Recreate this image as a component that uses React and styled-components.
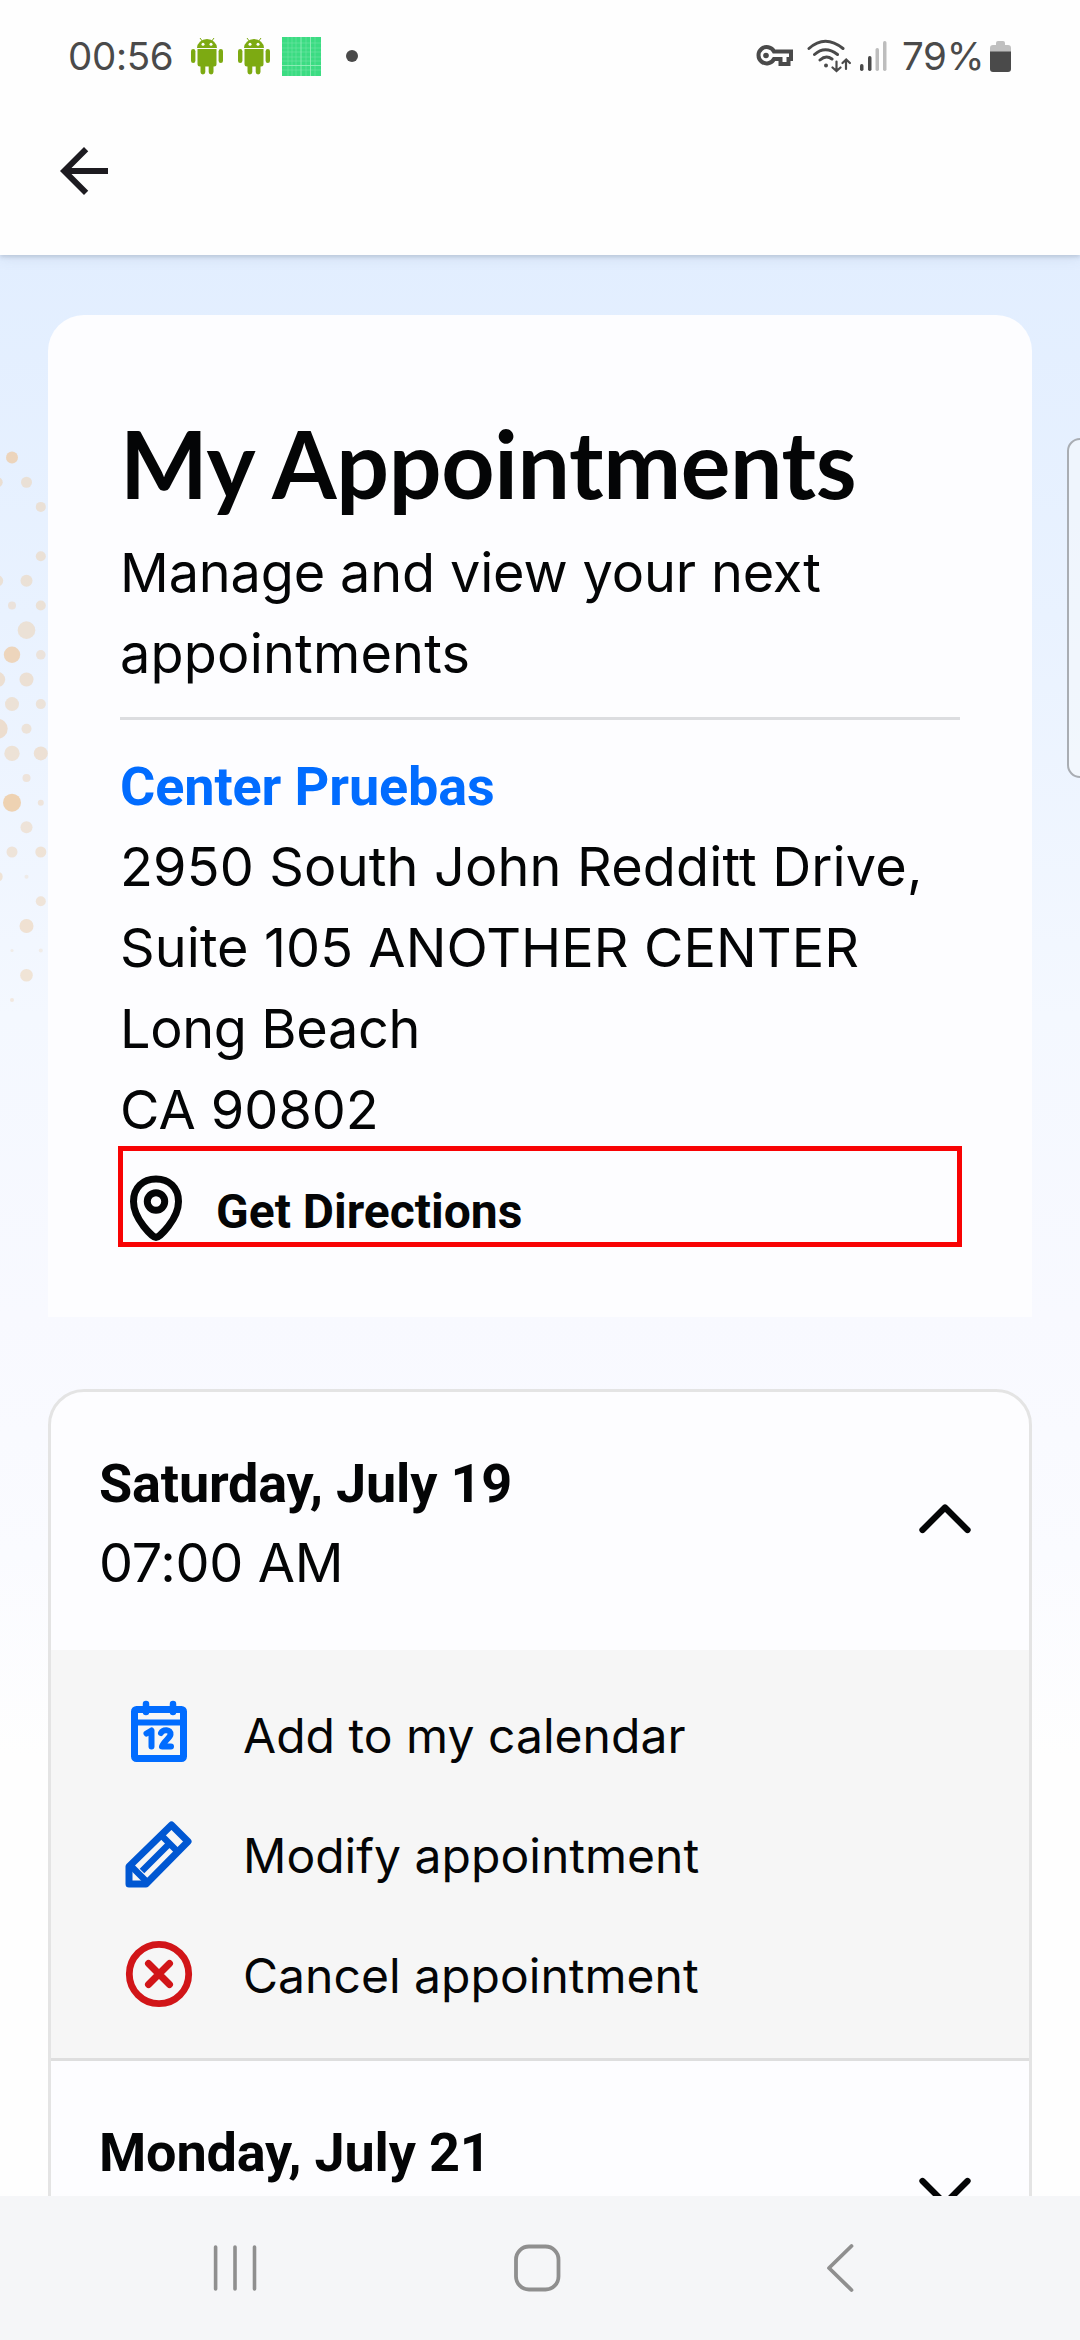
import React from "react";
import styled, { createGlobalStyle } from "styled-components";

const GlobalStyle = createGlobalStyle`
  *, *::before, *::after { box-sizing: border-box; }
  html, body { margin: 0; padding: 0; background: #fff; }
  h1, h2, p { margin: 0; }
  button { border: 0; padding: 0; background: none; font: inherit; color: inherit; text-align: left; }
  svg { display: block; flex: none; }
`;

const Screen = styled.div`
  display: flex;
  flex-direction: column;
  width: 1080px;
  height: 2340px;
  overflow: hidden;
  background: #fefefe;
  color: #040506;
  font-family: Inter, Roboto, sans-serif;
`;

const StatusBar = styled.header`
  display: flex;
  justify-content: space-between;
  align-items: center;
  height: 112px;
  padding: 0 69px 0 68px;
  color: #4a4a4a;
`;

const StatusGroup = styled.div`
  display: flex;
  align-items: center;
`;

const StatusText = styled.span`
  width: ${(p) => p.$width}px;
  font-size: 38.5px;
  font-weight: 400;
  line-height: 48px;
  letter-spacing: ${(p) => p.$tracking}px;
  white-space: nowrap;
`;

const IconSlot = styled.span`
  display: block;
  margin-right: ${(p) => p.$after || 0}px;
`;

const TopBar = styled.div`
  display: flex;
  flex: none;
  height: 143px;
  padding: 23px 48px 0;
  background: #fefefe;
`;

const HeaderBlock = styled.div`
  position: relative;
  z-index: 2;
  flex: none;
  background: #fefefe;
  box-shadow: 0 2px 4px rgba(90, 110, 130, 0.24), 0 4px 12px rgba(90, 110, 130, 0.1);
`;

const Content = styled.main`
  position: relative;
  flex: 1;
  min-height: 0;
  overflow: hidden;
  padding: 60px 48px 0;
  background: linear-gradient(
    180deg,
    #e2eeff 0,
    #e9f2ff 360px,
    #f4f8ff 760px,
    #f8f9ff 1060px,
    #fafbff 1300px,
    #fefefe 1500px
  );
`;

const DotPattern = styled.svg`
  position: absolute;
  left: 0;
  top: 180px;
`;

const EdgeHandle = styled.div`
  position: absolute;
  right: -14px;
  top: 183px;
  width: 27px;
  height: 340px;
  border: 2px solid #a9adb3;
  border-radius: 13px;
  background: rgba(245, 248, 252, 0.6);
`;

const CenterCard = styled.section`
  position: relative;
  padding: 79px 72px 72px;
  height: 1002px;
  border-radius: 36px 36px 0 0;
  background: #fdfdff;
`;

const Title = styled.h1`
  height: 138px;
  font-family: Lato, "Open Sans", sans-serif;
  font-size: 93px;
  font-weight: 700;
  line-height: 138px;
  letter-spacing: -0.35px;
  white-space: nowrap;
`;

const Line = styled.p`
  font-size: 54px;
  line-height: 81px;
  letter-spacing: ${(p) => p.$tracking}px;
  white-space: nowrap;
`;

const Divider = styled.hr`
  height: 3px;
  margin: 23px 0 26px;
  border: 0;
  background: #dcdde0;
`;

const CenterName = styled.h2`
  margin-bottom: -1px;
  font-family: Roboto, sans-serif;
  font-size: 54px;
  font-weight: 700;
  line-height: 81px;
  letter-spacing: -0.12px;
  color: #016cff;
`;

const Directions = styled.button`
  display: flex;
  align-items: flex-start;
  width: 844px;
  height: 101px;
  margin: -4px -2px 0;
  padding-top: 19px;
  border: 5px solid #f80304;
`;

const PinSlot = styled.span`
  display: block;
  margin-left: -2px;
`;

const DirectionsLabel = styled.span`
  margin-left: 23px;
  font-family: Roboto, sans-serif;
  font-size: 48px;
  font-weight: 700;
  line-height: 72px;
  padding-top: 6px;
`;

const AppointmentList = styled.section`
  position: relative;
  margin-top: 72px;
  height: 1100px;
  border: 3px solid #e4e4e4;
  border-radius: 36px 36px 0 0;
  background: #fdfdff;
  overflow: hidden;
`;

const AppointmentHeader = styled.button`
  display: flex;
  justify-content: space-between;
  align-items: center;
  width: 100%;
  height: 258px;
  padding: 0 48px;
`;

const When = styled.span`
  display: flex;
  flex-direction: column;
  height: 156px;
`;

const DateText = styled.span`
  font-family: Roboto, sans-serif;
  font-size: 54px;
  font-weight: 700;
  line-height: 81px;
  letter-spacing: -0.18px;
`;

const TimeText = styled.span`
  font-size: 54px;
  line-height: 78px;
  letter-spacing: -0.3px;
`;

const Actions = styled.div`
  padding: 24px 72px;
  height: 411px;
  background: #f6f6f6;
  border-bottom: 3px solid #dedede;
`;

const Action = styled.button`
  display: flex;
  align-items: center;
  gap: 48px;
  width: 100%;
  height: 120px;
`;

const ActionLabel = styled.span`
  padding-top: 3px;
  font-size: 48px;
  line-height: 72px;
  letter-spacing: 0.03px;
`;

const NavBar = styled.nav`
  display: flex;
  flex: none;
  justify-content: space-between;
  height: 144px;
  padding: 36px 200px 0;
  background: #f5f6f8;
`;

const AndroidIcon = () => (
  <svg width="32" height="38" viewBox="0 0 32 38" fill="#7daa12">
    <path d="M6 11a10 9 0 0 1 20 0z" />
    <path d="M9 1l2.200 3M23 1l-2.200 3" stroke="#7daa12" strokeWidth="1" />
    <path d="M6.500 12h19v15a2.500 2.500 0 0 1-2.500 2.500h-14a2.500 2.500 0 0 1-2.500-2.500z" />
    <rect x="0" y="12" width="4.400" height="14" rx="2.200" />
    <rect x="27.600" y="12" width="4.400" height="14" rx="2.200" />
    <rect x="9.500" y="26" width="4.800" height="11.500" rx="2.400" />
    <rect x="17.700" y="26" width="4.800" height="11.500" rx="2.400" />
    <circle cx="12" cy="7.300" r="1.500" fill="#fff" />
    <circle cx="20" cy="7.300" r="1.500" fill="#fff" />
  </svg>
);

const GridIcon = () => (
  <svg width="39" height="39" viewBox="0 0 39 39">
    <rect width="39" height="39" fill="#3bdc82" />
    <path
      d="M6 0V39M10 0V39M14 0V39M24 0V39M33 0V39M0 6H39M0 11H39M0 15H39M0 20H39M0 24H39M0 33H39"
      stroke="#7be6aa"
      strokeWidth=".5"
    />
    <path d="M19 0V39M28.500 0V39M0 28.500H39" stroke="#9df0c0" strokeWidth=".8" />
  </svg>
);

const KeyIcon = () => (
  <svg width="37" height="22" viewBox="0 0 37 22" fill="none" stroke="#4a4a4a">
    <path
      d="M18 6.500H35v7.500H32.500V19H24.500V14H18A8.200 8.200 0 1 1 18 6.500z"
      strokeWidth="4"
      strokeLinejoin="miter"
    />
    <circle cx="10" cy="10.500" r="2.800" fill="#4a4a4a" stroke="none" />
  </svg>
);

const WifiIcon = () => (
  <svg width="44" height="34" viewBox="0 0 44 34" fill="none" stroke="#4a4a4a" strokeWidth="3" strokeLinecap="round">
    <path d="M2 9.500Q18-5 36 9.500M7.500 15.500Q18 6 30.500 15.500M13 21Q19 15.500 25 20" />
    <circle cx="19" cy="26.500" r="2" fill="#4a4a4a" stroke="none" />
    <path d="M29.500 22.500v9M25.500 28.500l4 3.500 4-3.500M39 30v-9M35.500 24l3.700-3.500 3.700 3.500" strokeWidth="2.200" />
  </svg>
);

const SignalIcon = () => (
  <svg width="27" height="30" viewBox="0 0 27 30">
    <rect x="0" y="23" width="3.500" height="7" rx="1.700" fill="#4a4a4a" />
    <rect x="8" y="15" width="3.500" height="15" rx="1.700" fill="#4a4a4a" />
    <rect x="15.500" y="7" width="3.500" height="23" rx="1.700" fill="#bdbdbd" />
    <rect x="23" y="0" width="3.500" height="30" rx="1.700" fill="#bdbdbd" />
  </svg>
);

const BatteryIcon = () => (
  <svg width="21" height="31" viewBox="0 0 21 31">
    <path d="M6 2a2 2 0 0 1 2-2h5a2 2 0 0 1 2 2v2h3a3 3 0 0 1 3 3v4H0V7a3 3 0 0 1 3-3h3z" fill="#c0c0c0" />
    <path d="M0 10.500H21V28a3 3 0 0 1-3 3H3a3 3 0 0 1-3-3z" fill="#4a4a4a" />
  </svg>
);

const BackArrow = () => (
  <svg width="72" height="72" viewBox="0 0 24 24" fill="#1d1b20">
    <path d="M20 11H7.830l5.590-5.590L12 4l-8 8 8 8 1.410-1.410L7.830 13H20z" />
  </svg>
);

const PinIcon = () => (
  <svg width="72" height="72" viewBox="0 0 72 72" fill="none" stroke="#040506">
    <path
      d="M35 67.500C32 67.500 12.500 49.500 12.500 31.500C12.500 17.500 22 9 35 9S57.500 17.500 57.500 31.500C57.500 49.500 38 67.500 35 67.500z"
      strokeWidth="7"
      strokeLinejoin="round"
    />
    <circle cx="35" cy="31.500" r="8.700" strokeWidth="7" />
  </svg>
);

const Chevron = ({ down }) => (
  <svg
    width="72"
    height="72"
    viewBox="0 0 72 72"
    fill="none"
    stroke="#040506"
    strokeWidth="6.300"
    strokeLinecap="round"
    strokeLinejoin="round"
  >
    <path d={down ? "M13.500 27L36 49.500L58.500 27" : "M13.500 45L36 22.500L58.500 45"} />
  </svg>
);

const CalendarIcon = () => (
  <svg width="72" height="72" viewBox="0 0 72 72" fill="none" stroke="#016cff">
    <rect x="11.500" y="11.500" width="49" height="49" rx="2" strokeWidth="7" />
    <path d="M9 24.500H63" strokeWidth="6" />
    <path d="M23 6v8M50 6v8" strokeWidth="6.500" strokeLinecap="round" />
    <path
      d="M23.500 35.500L28.500 32.500V48.500M38 35C40 31 48 31 47.500 36.500C47 40 40.500 43.500 39 48.500H48"
      strokeWidth="6"
      strokeLinecap="round"
      strokeLinejoin="round"
    />
  </svg>
);

const PencilIcon = () => (
  <svg width="72" height="72" viewBox="0 0 72 72" fill="none" stroke="#0057d2" strokeWidth="7" strokeLinejoin="round">
    <path d="M6 66V48.500L48.500 7L65 23.500L23 66z" />
    <path d="M38.500 17.500L54.500 33.500M8 48L24 64M19 53L45 27" strokeWidth="6.500" />
  </svg>
);

const CancelIcon = () => (
  <svg width="72" height="72" viewBox="0 0 72 72" fill="none" stroke="#d11518">
    <circle cx="36" cy="36" r="29.700" strokeWidth="6.800" />
    <path d="M25.500 25.500L46.500 46.500M46.500 25.500L25.500 46.500" strokeWidth="7" strokeLinecap="round" />
  </svg>
);

const RecentsIcon = () => (
  <svg width="72" height="72" viewBox="0 0 72 72" stroke="#8f8f8f" strokeWidth="3.600" strokeLinecap="round">
    <path d="M15.600 15v42M35 15v42M54.500 15v42" />
  </svg>
);

const HomeIcon = () => (
  <svg width="72" height="72" viewBox="0 0 72 72" fill="none" stroke="#8f8f8f" strokeWidth="3.800">
    <rect x="12" y="14.500" width="42.500" height="43" rx="13" />
  </svg>
);

const NavBackIcon = () => (
  <svg width="72" height="72" viewBox="0 0 72 72" fill="none" stroke="#8f8f8f" strokeWidth="3.800" strokeLinecap="round" strokeLinejoin="round">
    <path d="M43.500 14L21 36L43.500 58" />
  </svg>
);

const COLUMNS = [-2.3, 12, 26.5, 40.8];

// Each dot: row, column, radius, opacity.
const DOTS = [
  [0, 1, 6, 0.75], [1, 0, 5, 0.5], [1, 2, 5.5, 0.45], [2, 3, 5, 0.45], [4, 3, 5, 0.45],
  [5, 0, 5.5, 0.45], [5, 2, 6, 0.45], [6, 1, 4, 0.4], [6, 3, 5, 0.45], [7, 2, 8.8, 0.45],
  [8, 1, 8.2, 0.75], [8, 3, 4.8, 0.4], [9, 0, 7.5, 0.5], [9, 2, 7, 0.48], [10, 1, 7, 0.45],
  [10, 3, 5, 0.42], [11, 0, 10, 0.55], [11, 2, 5, 0.42], [12, 1, 7.7, 0.45], [12, 3, 7, 0.48],
  [13, 2, 4, 0.4], [14, 1, 9, 0.85], [14, 3, 3, 0.4], [15, 2, 6, 0.42], [16, 1, 5.5, 0.42],
  [16, 3, 5.5, 0.45], [17, 0, 5, 0.45], [17, 2, 2, 0.25], [18, 3, 5, 0.42], [19, 2, 7, 0.5],
  [20, 1, 1.5, 0.25], [20, 3, 2, 0.25], [21, 2, 6.3, 0.45], [22, 1, 2, 0.35],
];

const Dots = () => (
  <DotPattern width="48" height="600" viewBox="0 0 48 600" fill="#edcba5">
    {DOTS.map(([row, col, r, opacity]) => (
      <circle key={`${row}-${col}`} cx={COLUMNS[col]} cy={22.6 + row * 24.65} r={r} opacity={opacity} />
    ))}
  </DotPattern>
);

const ACTIONS = [
  { label: "Add to my calendar", Icon: CalendarIcon },
  { label: "Modify appointment", Icon: PencilIcon },
  { label: "Cancel appointment", Icon: CancelIcon },
];

export default function App() {
  return (
    <Screen>
      <GlobalStyle />
      <HeaderBlock>
        <StatusBar>
          <StatusGroup>
            <StatusText $tracking={-0.3} $width={123}>00:56</StatusText>
            <IconSlot $after={15}><AndroidIcon /></IconSlot>
            <IconSlot $after={12}><AndroidIcon /></IconSlot>
            <IconSlot $after={25}><GridIcon /></IconSlot>
            <svg width="12" height="12"><circle cx="6" cy="6" r="6" fill="#4a4a4a" /></svg>
          </StatusGroup>
          <StatusGroup>
            <IconSlot $after={14}><KeyIcon /></IconSlot>
            <IconSlot $after={9}><WifiIcon /></IconSlot>
            <IconSlot $after={15}><SignalIcon /></IconSlot>
            <StatusText $tracking={-0.3} $width={88}>79%</StatusText>
            <BatteryIcon />
          </StatusGroup>
        </StatusBar>
        <TopBar>
          <BackArrow />
        </TopBar>
      </HeaderBlock>
      <Content>
        <Dots />
        <EdgeHandle />
        <CenterCard>
          <Title>My Appointments</Title>
          <Line $tracking={-0.15}>Manage and view your next</Line>
          <Line $tracking={0.2}>appointments</Line>
          <Divider />
          <CenterName>Center Pruebas</CenterName>
          <Line $tracking={0.16}>2950 South John Redditt Drive,</Line>
          <Line $tracking={0.08}>Suite 105 ANOTHER CENTER</Line>
          <Line $tracking={-0.35}>Long Beach</Line>
          <Line $tracking={0}>CA 90802</Line>
          <Directions>
            <PinSlot><PinIcon /></PinSlot>
            <DirectionsLabel>Get Directions</DirectionsLabel>
          </Directions>
        </CenterCard>
        <AppointmentList>
          <AppointmentHeader>
            <When>
              <DateText>Saturday, July 19</DateText>
              <TimeText>07:00 AM</TimeText>
            </When>
            <Chevron />
          </AppointmentHeader>
          <Actions>
            {ACTIONS.map(({ label, Icon }) => (
              <Action key={label}>
                <Icon />
                <ActionLabel>{label}</ActionLabel>
              </Action>
            ))}
          </Actions>
          <AppointmentHeader>
            <When>
              <DateText>Monday, July 21</DateText>
            </When>
            <Chevron down />
          </AppointmentHeader>
        </AppointmentList>
      </Content>
      <NavBar>
        <RecentsIcon />
        <HomeIcon />
        <NavBackIcon />
      </NavBar>
    </Screen>
  );
}
